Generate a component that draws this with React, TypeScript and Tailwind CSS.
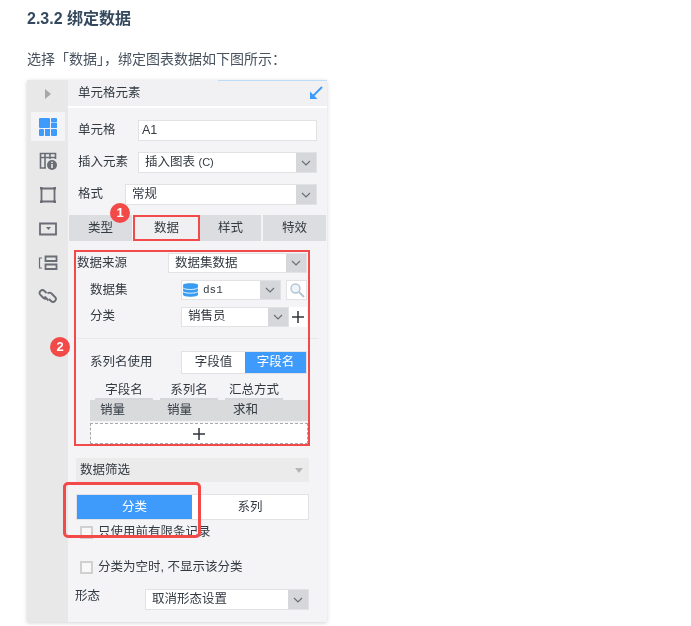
import { ReactNode } from 'react'

const fontStack = "font-['Liberation_Sans','Noto_Sans_CJK_SC',sans-serif]"

function Chevron() {
  return (
    <svg aria-hidden="true" viewBox="0 0 12 12" className="h-3 w-3" fill="none" stroke="#6b7078" strokeWidth="1.2">
      <path d="M2 4 6 8 10 4" />
    </svg>
  )
}

function Select({ className, children }: { className: string; children: ReactNode }) {
  return (
    <div className={`flex border border-[#e2e2e5] bg-white ${className}`}>
      <div className="flex min-w-0 flex-1 items-center gap-1 whitespace-nowrap">{children}</div>
      <div className="flex w-5 shrink-0 items-center justify-center bg-[#d6d7da]">
        <Chevron />
      </div>
    </div>
  )
}

function SideIcon({ active, children }: { active?: boolean; children: ReactNode }) {
  return (
    <div className={`flex h-[29px] w-[34px] items-center justify-center ${active ? 'bg-[#f4f4f6]' : ''}`}>
      <svg aria-hidden="true" viewBox="0 0 20 20" className="h-[20px] w-[20px]" fill="none" stroke="#6a6d75" strokeWidth="1.6">
        {children}
      </svg>
    </div>
  )
}

function Sidebar() {
  return (
    <div className="flex w-[41px] shrink-0 flex-col items-center bg-[#e8e8e8] pl-[1px] pt-[5px]">
      <svg aria-hidden="true" viewBox="0 0 8 12" className="mt-[3px] h-[12px] w-[8px]">
        <path d="M1 1 7 6 1 11Z" fill="#a8a8a8" />
      </svg>
      <div className="mt-[12px] flex flex-col gap-[5px]">
        <SideIcon active>
          <g fill="#3f9bfb" stroke="none">
            <rect x="1" y="1" width="11" height="10" rx="1" />
            <rect x="13" y="1" width="6" height="4.500" rx="1" />
            <rect x="13" y="6" width="6" height="5" />
            <rect x="1" y="12" width="5" height="7" rx="1" />
            <rect x="7" y="12" width="5" height="7" />
            <rect x="13" y="12" width="6" height="7" rx="1" />
          </g>
        </SideIcon>
        <SideIcon>
          <path d="M8 17H2.500V2.500h15V8M2.500 6.500h15M7 2.500V17M12 2.500V8" />
          <circle cx="14" cy="14" r="5" fill="#6a6d75" stroke="none" />
          <path d="M14 13v4M14 10.800v1.200" stroke="#e8e8e8" />
        </SideIcon>
        <SideIcon>
          <path d="M3.500 3.500h13v13h-13z" strokeWidth="1.800" />
          <path d="M2 2h2.500v2.500H2zM15.500 2H18v2.500h-2.500zM2 15.500h2.500V18H2zM15.500 15.500H18V18h-2.500z" fill="#6a6d75" stroke="none" />
        </SideIcon>
        <SideIcon>
          <path d="M2 4.500h16v11H2z" strokeWidth="1.800" />
          <path d="M8 8h5l-2.500 3Z" fill="#6a6d75" stroke="none" />
        </SideIcon>
        <SideIcon>
          <path d="M7.500 3.500h11v4.500h-11zM7.500 11.500h11V16h-11z" strokeWidth="1.800" />
          <path d="M4 5H1.500v10H4" strokeWidth="1.200" />
        </SideIcon>
        <SideIcon>
          <path d="M10.500 13.500 6.500 9.500M8.500 6 6.500 4a2.800 2.800 0 0 0-4 4l3 3a2.800 2.800 0 0 0 4 0" strokeWidth="1.800" />
          <path d="M9.500 6.500a2.800 2.800 0 0 1 4 0l3.500 3.500a2.800 2.800 0 0 1-4 4l-2-2" strokeWidth="1.800" />
        </SideIcon>
      </div>
    </div>
  )
}

function Panel() {
  return (
    <div className="relative mt-[12px] flex h-[542px] w-[300px] text-[12.5px] text-[#333a42] shadow-[0_1px_4px_rgba(0,0,0,0.18)]">
      <Sidebar />
      <div className="flex min-w-0 flex-1 flex-col bg-[#f4f4f6]">
        <div className="flex h-[28px] shrink-0 items-center justify-between border-b-2 border-white bg-[#f1f1f3] pl-[10px] pr-[4px]">
          <span>单元格元素</span>
          <svg aria-hidden="true" viewBox="0 0 14 14" className="h-[14px] w-[14px]" fill="none">
            <path d="M13 1 3.500 10.500" stroke="#3f9bfb" strokeWidth="2" />
            <path d="M1 5.500V13h7.500Z" fill="#3f9bfb" />
          </svg>
        </div>

        <div className="ml-[10px] mt-[12px] flex h-[21px] items-center">
          <span className="w-[60px]">单元格</span>
          <div className="flex h-full w-[179px] items-center border border-[#e2e2e5] bg-white pl-[3px]">A1</div>
        </div>
        <div className="ml-[10px] mt-[11px] flex h-[21px] items-center">
          <span className="w-[60px]">插入元素</span>
          <Select className="h-full w-[179px] pl-[6px]">
            <span>插入图表 <span className="text-[11px]">(C)</span></span>
          </Select>
        </div>
        <div className="ml-[10px] mt-[11px] flex h-[21px] items-center">
          <span className="w-[47px]">格式</span>
          <Select className="h-full w-[192px] pl-[6px]">常规</Select>
        </div>

        <div className="mt-[10px] flex h-[26px] pl-[1px]">
          <div className="flex w-[63px] items-center justify-center bg-[#dcdde0]">类型</div>
          <div className="ml-[1px] flex w-[67px] items-center justify-center border-2 border-[#f24a48] bg-[#f0f0f2]">数据</div>
          <div className="flex w-[61px] items-center justify-center bg-[#dcdde0]">样式</div>
          <div className="ml-[2px] flex w-[63px] items-center justify-center bg-[#dcdde0]">特效</div>
        </div>

        <div className="ml-[6px] mt-[9px] flex h-[196px] w-[236px] flex-col overflow-visible p-[2px] pl-[3px]">
          <div className="mt-[1px] flex h-[20px] items-center">
            <span className="w-[91px]">数据来源</span>
            <Select className="h-full w-[139px] pl-[6px]">数据集数据</Select>
          </div>
          <div className="mt-[7px] flex h-[20px] items-center pl-[13px]">
            <span className="w-[91px]">数据集</span>
            <Select className="h-full w-[100px]">
              <svg aria-hidden="true" viewBox="0 0 16 16" className="h-[17px] w-[17px] shrink-0">
                <path d="M1 3.500C1 1.500 15 1.500 15 3.500V13C15 15.500 1 15.500 1 13Z" fill="#3a9cf0" />
                <path d="M1 6.500C3 8.500 13 8.500 15 6.500M1 10C3 12 13 12 15 10" fill="none" stroke="#fff" strokeWidth="0.800" />
              </svg>
              <span className="font-['Liberation_Mono',monospace] text-[11px]">ds1</span>
            </Select>
            <div className="ml-[5px] flex h-full w-[21px] items-center justify-center border border-[#e2e2e5] bg-white">
              <svg aria-hidden="true" viewBox="0 0 16 16" className="h-[16px] w-[16px]" fill="none" stroke="#b4c4d4" strokeWidth="1.400">
                <circle cx="6.500" cy="6.500" r="4.500" fill="#eef4fa" />
                <path d="M10 10 15 15" strokeWidth="2" />
              </svg>
            </div>
          </div>
          <div className="mt-[7px] flex h-[20px] items-center pl-[13px]">
            <span className="w-[91px]">分类</span>
            <Select className="h-full w-[108px] pl-[6px]">销售员</Select>
            <div className="flex h-full w-[18px] items-center justify-center bg-white">
              <svg aria-hidden="true" viewBox="0 0 14 14" className="h-[14px] w-[14px]" stroke="#30343a" strokeWidth="1.500">
                <path d="M7 1v12M1 7h12" />
              </svg>
            </div>
          </div>

          <div className="mt-[11px] h-[1px] w-[241px] shrink-0 bg-[#e8e8e8]" />

          <div className="mt-[12px] flex h-[23px] items-center pl-[13px]">
            <span className="w-[91px]">系列名使用</span>
            <div className="flex h-full w-[126px] border border-[#e2e2e5] bg-white">
              <div className="flex w-[63px] items-center justify-center">字段值</div>
              <div className="flex flex-1 items-center justify-center bg-[#3f9bfb] text-white">字段名</div>
            </div>
          </div>

          <div className="mt-[8px] flex h-[19px] pl-[18px]">
            <div className="flex w-[58px] justify-center border-b-2 border-[#d6d7da] leading-[16px]">字段名</div>
            <div className="ml-[7px] flex w-[58px] justify-center border-b-2 border-[#d6d7da] leading-[16px]">系列名</div>
            <div className="ml-[7px] flex w-[58px] justify-center whitespace-nowrap border-b-2 border-[#d6d7da] leading-[16px]">汇总方式</div>
          </div>
          <div className="ml-[13px] flex h-[21px] w-[218px] items-center bg-[#d9dadc]">
            <span className="ml-[10px] w-[67px]">销量</span>
            <span className="w-[66px]">销量</span>
            <span>求和</span>
          </div>
          <div className="ml-[13px] mt-[2px] flex h-[21px] w-[218px] items-center justify-center border border-dashed border-[#a9a9a9] bg-white">
            <svg aria-hidden="true" viewBox="0 0 14 14" className="h-[14px] w-[14px]" stroke="#30343a" strokeWidth="1.500">
              <path d="M7 1v12M1 7h12" />
            </svg>
          </div>
        </div>

        <div className="ml-[8px] mt-[12px] flex h-[24px] w-[233px] items-center justify-between bg-[#ebebeb] pl-[4px] pr-[6px]">
          <span>数据筛选</span>
          <span className="h-0 w-0 border-x-[4px] border-t-[5px] border-x-transparent border-t-[#b5b5b5]" />
        </div>

        <div className="ml-[8px] mt-[12px] flex h-[26px] w-[233px] border border-[#e2e2e5] bg-white">
          <div className="flex w-[115px] items-center justify-center bg-[#3f9bfb] text-white">分类</div>
          <div className="flex flex-1 items-center justify-center">系列</div>
        </div>

        <label className="ml-[12px] mt-[4px] flex h-[16px] items-center gap-[5px]">
          <span className="h-[13px] w-[13px] border-2 border-[#d0d0d0] bg-[#f8f8f8]" />
          <span>只使用前有限条记录</span>
        </label>
        <label className="ml-[12px] mt-[19px] flex h-[16px] items-center gap-[5px]">
          <span className="h-[13px] w-[13px] border-2 border-[#d0d0d0] bg-[#f8f8f8]" />
          <span>分类为空时, 不显示该分类</span>
        </label>

        <div className="ml-[7px] mt-[14px] flex h-[21px]">
          <span className="w-[70px] leading-[15px]">形态</span>
          <Select className="h-full w-[164px] pl-[6px]">取消形态设置</Select>
        </div>
      </div>

      <div className="absolute right-0 top-0 h-[1px] w-[109px] bg-[#bcdcf8]" />
      <span className="absolute left-[83px] top-[123px] flex h-[20px] w-[20px] items-center justify-center rounded-full bg-[#f24a48] text-[13px] font-bold text-white">1</span>
      <span className="absolute left-[23px] top-[257px] flex h-[20px] w-[20px] items-center justify-center rounded-full bg-[#f24a48] text-[13px] font-bold text-white">2</span>
      <div className="absolute left-[47px] top-[170px] h-[196px] w-[236px] border-2 border-[#f24a48]" />
      <div className="absolute left-[36px] top-[402px] h-[56px] w-[138px] rounded-[5px] border-[3px] border-[#f24a48]" />
    </div>
  )
}

export default function App() {
  return (
    <div className={`h-[626px] w-[691px] overflow-hidden bg-white pl-[27px] pt-[10px] blur-[0.5px] ${fontStack}`}>
      <h3 className="text-[16px] font-bold leading-[18px] text-[#34495e]">2.3.2 绑定数据</h3>
      <p className="mt-[22px] text-[14px] leading-[18px] text-[#47525e]">选择「数据」，绑定图表数据如下图所示：</p>
      <Panel />
    </div>
  )
}
